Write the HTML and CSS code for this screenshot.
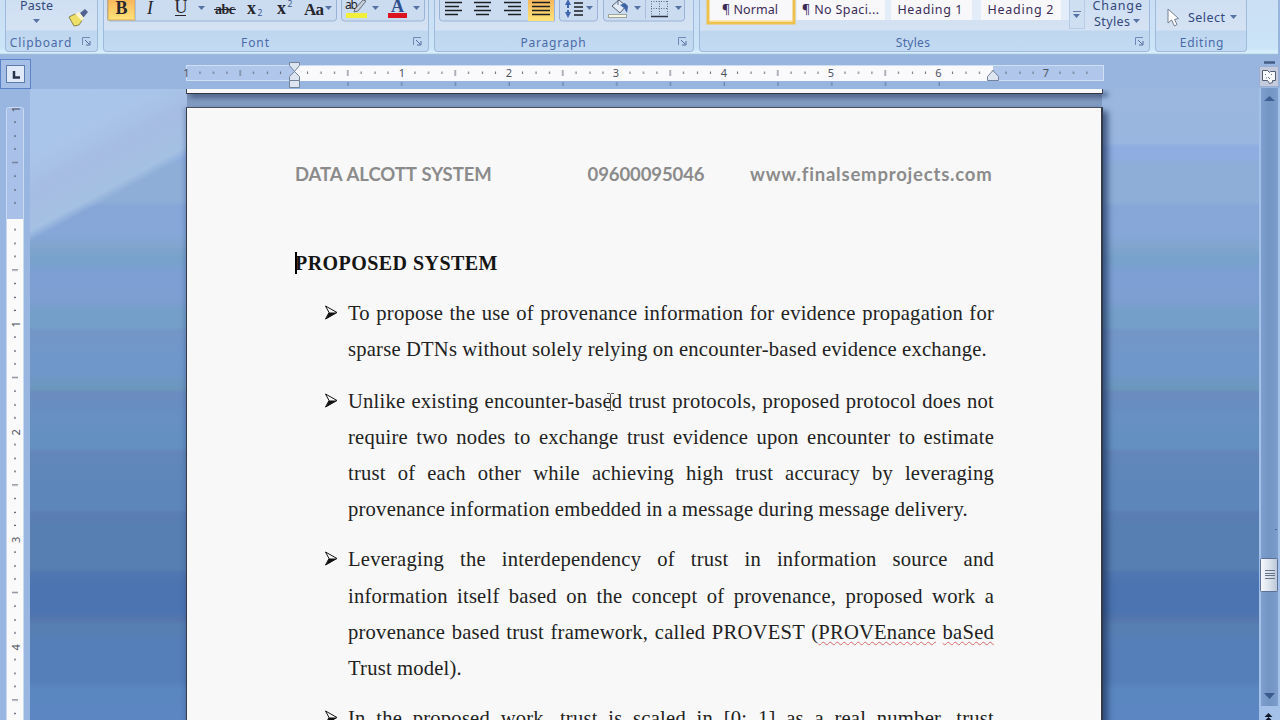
FILE: index.html
```html
<!DOCTYPE html>
<html lang="en">
<head>
<meta charset="utf-8">
<title>Proposed System</title>
<link rel="stylesheet" href="styles.css">
</head>
<body>
<div class="app">
  <header class="ribbon">
    <section class="group clipboard">
      <svg class="tools" width="91" height="31" viewBox="6 0 91 31">
        <text class="ui" x="20" y="10" textLength="33">Paste</text>
        <path class="arrow" d="M33 19h7l-3.500 4z"/>
        <path d="M80 13l5-4 3 3-5 6z" fill="#526290"/><path d="M69 17l6-3 8 5-4 6-5 1z" fill="#eedf66" stroke="#8c8550"/><path d="M75 14l4-2 5 6-2 3z" fill="#fff5c8"/>
      </svg>
      <div class="caption"><span class="cap-clip">Clipboard</span><svg class="launch" width="9" height="9"><path d="M.5 8V.5H8" /><path class="corner" d="M3 3l4 4M4 8h4V4"/></svg></div>
    </section>
    <section class="group font">
      <svg class="tools" width="324" height="31" viewBox="104 0 324 31">
        <path class="box" d="M107.500 -2v20q0 3 3 3h223q3 0 3-3v-20M341.500 -2v20q0 3 3 3h77q3 0 3-3v-20"/>
        <rect x="108" y="-2" width="27" height="22" fill="url(#gold)" stroke="#d3a65b"/>
        <path class="sep" d="M135.500 0v20"/>
        <text class="glyph" x="115.500" y="14" font-weight="700">B</text>
        <text class="glyph" x="147" y="14" font-style="italic">I</text>
        <text class="glyph" x="174.500" y="13">U</text><path d="M175 15.500h11" stroke="#26262c"/>
        <path class="arrow" d="M198 6h7l-3.500 4z"/>
        <text class="glyph abc" x="215" y="13.500" textLength="20">abc</text><path d="M214 9.500h22" stroke="#26262c"/>
        <text class="glyph" x="247" y="13.500" font-weight="700">x</text><text class="tiny" x="257.500" y="15.500">2</text>
        <text class="glyph" x="277" y="13.500" font-weight="700">x</text><text class="tiny" x="287.500" y="6.500">2</text>
        <text class="glyph aa" x="304" y="14.500" textLength="20">Aa</text><path class="arrow" d="M325 6h7l-3.500 4z"/>
        <text class="hl" x="345" y="9" textLength="13">ab</text><path d="M355 9l8-9 3 1-8 10-4 1z" fill="#c8d2de" stroke="#686c76"/><rect x="346" y="13" width="21" height="5" fill="#f2ee3c"/><path class="arrow" d="M372 6h7l-3.500 4z"/>
        <text class="glyph" x="391" y="12" fill="#304f8f" font-weight="700" textLength="14">A</text><rect x="388" y="13" width="19" height="5" fill="#dc1420"/><path class="arrow" d="M413 6h7l-3.500 4z"/>
        <defs><linearGradient id="gold" x2="0" y2="1"><stop stop-color="#f6b25a"/><stop offset="1" stop-color="#ffe477"/></linearGradient></defs>
      </svg>
      <div class="caption"><span class="cap-font">Font</span><svg class="launch" width="9" height="9"><path d="M.5 8V.5H8" /><path class="corner" d="M3 3l4 4M4 8h4V4"/></svg></div>
    </section>
    <section class="group paragraph">
      <svg class="tools" width="258" height="31" viewBox="435 0 258 31">
        <path class="box" d="M439.500 -2v20q0 3 3 3h112V-2M559.500 -2v20q0 3 3 3h32q3 0 3-3v-20M603.500 -2v20q0 3 3 3h75q3 0 3-3v-20"/>
        <rect x="528" y="-2" width="26" height="23" fill="url(#gold)"/>
        <g stroke="#1d1e22" stroke-width="1.300">
          <path d="M445 2.500h17M445 6.500h14M445 10.500h17M445 14.500h13"/>
          <path d="M474 2.500h17M476 6.500h13M474 10.500h17M476 14.500h13"/>
          <path d="M504 2.500h17M508 6.500h13M504 10.500h17M508 14.500h13"/>
          <path d="M532 2.500h18M532 6.500h18M532 10.500h18M532 14.500h18"/>
          <path d="M574 3h9M574 7h9M574 11h9M574 15h9"/>
        </g>
        <path d="M568 -1l3 6h-2v7h2l-3 6-3-6h2V5h-2z" fill="#3f65ae"/><path d="M566 9h4" stroke="#c8daf0" stroke-width="2"/>
        <path class="arrow" d="M586 6h7l-3.500 4z"/>
        <path d="M612 6l7-6 7 6-6 7z" fill="#e2ebf6" stroke="#55606f"/><path d="M620 5l5-2 3 3-1 7-3-5z" fill="#3f65a7"/><path d="M618 -1v6" stroke="#5b6b84"/><rect x="608.500" y="14.500" width="18" height="3" fill="#f7f5e2" stroke="#98a6a2"/>
        <path class="arrow" d="M634 6h7l-3.500 4z"/>
        <path d="M645.500 -1v20" class="sep"/>
        <path d="M651 1.500h17M651 8.500h17M651.500 1v15M659.500 1v15M667.500 1v15" stroke="#606c84" stroke-dasharray="1 1.500" fill="none"/><path d="M651 16.500h17" stroke="#2e3442" stroke-width="1.500"/>
        <path class="arrow" d="M675 6h7l-3.500 4z"/>
      </svg>
      <div class="caption"><span class="cap-para">Paragraph</span><svg class="launch" width="9" height="9"><path d="M.5 8V.5H8" /><path class="corner" d="M3 3l4 4M4 8h4V4"/></svg></div>
    </section>
    <section class="group styles">
      <svg class="tools" width="449" height="31" viewBox="700 0 449 31">
        <path d="M707 -3h363v23H707z" fill="#e3edf9"/>
        <path d="M797 -3h88v23h-88zM891 -3h81v23h-81zM981 -3h80v23h-80z" fill="#f8f8fb"/>
        <rect x="708" y="-4" width="86" height="27" fill="#f8f8fb" stroke="#edc14b" stroke-width="3"/><path d="M710 20.500h82" stroke="#ffebaa"/>
        <text class="ui style" x="722" y="13.500" textLength="56">¶ Normal</text>
        <text class="ui style" x="802" y="13.500" textLength="77">¶ No Spaci...</text>
        <text class="ui style" x="897.500" y="13.500" textLength="65">Heading 1</text>
        <text class="ui style" x="987.500" y="13.500" textLength="66">Heading 2</text>
        <path d="M1069.500 0v28.500h15V0" fill="#cfdff2" stroke="#b7cbe7"/><path d="M1073 11.500h8" stroke="#6b7da4"/><path class="arrow" d="M1073 14h7l-3.500 4z"/>
        <text class="ui" x="1092.500" y="10" textLength="49.500">Change</text>
        <text class="ui" x="1094" y="26" textLength="36">Styles</text><path class="arrow" d="M1133 19h7l-3.500 4z"/>
      </svg>
      <div class="caption"><span class="cap-styles">Styles</span><svg class="launch" width="9" height="9"><path d="M.5 8V.5H8" /><path class="corner" d="M3 3l4 4M4 8h4V4"/></svg></div>
    </section>
    <section class="group editing">
      <svg class="tools" width="90" height="31" viewBox="1156 0 90 31">
        <path d="M1168 9v14l3.500-3 3 6 2.500-1.500-2.500-5 4-1z" fill="#fff" stroke="#747f93"/>
        <text class="ui" x="1188" y="22" textLength="37">Select</text><path class="arrow" d="M1230 15h7l-3.500 4z"/>
      </svg>
      <div class="caption"><span class="cap-edit">Editing</span></div>
    </section>
  </header>

  <main class="workspace">
    <aside class="left">
      <div class="tabstop"><svg width="19" height="18"><rect x=".5" y=".5" width="18" height="17" fill="#dfe9f8" stroke="#5d7cae"/><path d="M8 6v6.500h6" fill="none" stroke="#26334d" stroke-width="2.500"/></svg></div>
      <svg class="vruler" width="30" height="631" viewBox="0 89 30 631">
        <defs>
          <pattern id="vt" x="0" y="216.500" width="30" height="107.500" patternUnits="userSpaceOnUse"><path d="M14 13h2M14 27h2M14 40h2M12 53.500h6M14 67h2M14 81h2M14 94h2" stroke="#5a6070" stroke-width="1.200"/></pattern>
        </defs>
        <rect x="6.500" y="107.500" width="17" height="620" rx="2" fill="#a9c1e8" stroke="#c7d9f3"/>
        <rect x="7" y="219" width="16" height="505" fill="#fafafb"/>
        <rect x="7" y="112" width="16" height="610" fill="url(#vt)"/>
        <g class="num"><text transform="translate(20 112.500) rotate(-90)">1</text><text transform="translate(20 327.500) rotate(-90)">1</text><text transform="translate(20 435.500) rotate(-90)">2</text><text transform="translate(20 543) rotate(-90)">3</text><text transform="translate(20 650.500) rotate(-90)">4</text></g>
      </svg>
    </aside>

    <div class="center">
      <div class="rulerrow">
        <svg width="1229" height="34" viewBox="30 55 1229 34">
          <defs>
            <pattern id="ht" x="294" y="0" width="107.500" height="90" patternUnits="userSpaceOnUse"><path d="M13.500 71.500v2.500M27 71.500v2.500M40.500 71.500v2.500M53.750 70v6M67 71.500v2.500M81 71.500v2.500M94 71.500v2.500" stroke="#626878"/></pattern>
            <pattern id="hb" x="294" y="0" width="53.750" height="90" patternUnits="userSpaceOnUse"><path d="M.5 82v4" stroke="#6e87b3"/><path d="M53.500 82v4" stroke="#6e87b3" stroke-width=".5"/></pattern>
          </defs>
          <rect x="186.500" y="65.500" width="917" height="15" fill="#b0c6ea" stroke="#cfe0f5"/>
          <rect x="294" y="66" width="699" height="15" fill="#fafafc"/>
          <rect x="190" y="66" width="898" height="14" fill="url(#ht)"/>
          <rect x="340" y="81" width="640" height="7" fill="url(#hb)"/>
          <g class="num" text-anchor="middle"><text x="186.500" y="77">1</text><text x="402" y="77">1</text><text x="509" y="77">2</text><text x="616" y="77">3</text><text x="724" y="77">4</text><text x="831" y="77">5</text><text x="938.500" y="77">6</text><text x="1046" y="77">7</text></g>
          <path d="M289.500 62.500h10v3l-5 6-5-6zM289.500 80.500v-4l5-5 5 5v4zM289.500 80.500h10v7h-10zM987.500 80.500v-4l5.500-6 5.500 6v4z" fill="#dce5f0" stroke="#73839c"/>
        </svg>
      </div>
      <div class="desk">
        <div class="prev"></div>
        <article class="page">
          <div class="pagehead"><span class="h1">DATA ALCOTT SYSTEM</span><span class="h2">09600095046</span><span class="h3">www.finalsemprojects.com</span></div>
          <h1 class="title">PROPOSED SYSTEM<i class="caret"></i></h1>
          <ul class="list">
            <li class="first"><svg class="bullet" width="14" height="15"><use href="#wing"/></svg>
              <p class="line">To propose the use of provenance information for evidence propagation for</p>
              <p class="line w639">sparse DTNs without solely relying on encounter-based evidence exchange.</p></li>
            <li><svg class="bullet" width="14" height="15"><use href="#wing"/></svg>
              <p class="line">Unlike existing encounter-based trust protocols, proposed protocol does not</p>
              <p class="line">require two nodes to exchange trust evidence upon encounter to estimate</p>
              <p class="line">trust of each other while achieving high trust accuracy by leveraging</p>
              <p class="line w620">provenance information embedded in a message during message delivery.</p></li>
            <li><svg class="bullet" width="14" height="15"><use href="#wing"/></svg>
              <p class="line">Leveraging the interdependency of trust in information source and</p>
              <p class="line">information itself based on the concept of provenance, proposed work a</p>
              <p class="line">provenance based trust framework, called PROVEST (<span class="err">PROVEnance</span> <span class="err">baSed</span></p>
              <p class="line w114">Trust model).</p></li>
            <li><svg class="bullet" width="14" height="15"><use href="#wing"/></svg>
              <p class="line">In the proposed work, trust is scaled in [0; 1] as a real number, trust</p></li>
          </ul>
          <svg class="ibeam" width="9" height="20"><path d="M1 1.500h3M5 1.500h3M4.500 2v16M1 18.500h3M5 18.500h3" stroke="#555"/></svg>
        </article>
      </div>
    </div>

    <aside class="scroll">
      <svg width="21" height="665" viewBox="1259 55 21 665">
        <defs>
          <linearGradient id="track"><stop stop-color="#7f9fcf"/><stop offset=".5" stop-color="#7295c3"/><stop offset="1" stop-color="#7d9dcb"/></linearGradient>
          <linearGradient id="thumb"><stop stop-color="#f7f9fc"/><stop offset=".5" stop-color="#dce3ed"/><stop offset="1" stop-color="#b9c5d6"/></linearGradient>
        </defs>
        <rect x="1259" y="88" width="21" height="632" fill="#a3c1e9"/>
        <rect x="1261" y="88" width="17" height="618" fill="url(#track)"/>
        <path d="M1264 62.500h11" stroke="#445d86" stroke-width="2.500"/>
        <rect x="1259.500" y="66.500" width="19" height="20" fill="#c4cbdc" stroke="#9daed0"/>
        <path d="M1262.500 70.500h5l2 2 1-1h5v9h-3v2l-3 1-2-3h-5z" fill="#f7f8fa" stroke="#535d72"/><path d="M1265 74l1 1M1268 77l2 2M1272 74l-1 1M1266 78h1" stroke="#6b7383" fill="none"/>
        <path d="M1264 101h11l-5.500-5z" fill="#3d5f93"/>
        <rect x="1260.500" y="558.500" width="17" height="33" rx="1" fill="url(#thumb)" stroke="#5c7199"/>
        <path d="M1265 570.500h10M1265 573.500h10M1265 575.500h10M1265 578.500h10" stroke="#667487"/>
        <path d="M1264 693h11l-5.500 6z" fill="#3b5a8d"/>
        <path d="M1264.500 717l4-4 4 4zM1264.500 721l4-4 4 4z" fill="#101827"/><path d="M1275 529.500h2" stroke="#496796"/>
      </svg>
    </aside>
  </main>
</div>
<svg width="0" height="0" class="defs"><defs><g id="wing"><path d="M1.500 1l11.500 6.500L1.500 14l3.500-6.500z" fill="none" stroke="#111"/><path d="M5 7.500h8L2 14z" fill="#111"/></g></defs></svg>
</body>
</html>
```

FILE: styles.css
```css
* { box-sizing: border-box; }
body { margin: 0; overflow: hidden; background: #98b5df; font-family: "Noto Sans", "Open Sans", sans-serif; }
.app { width: 1280px; height: 720px; display: flex; flex-direction: column; overflow: hidden; }
.defs { display: block; }

/* Ribbon */
.ribbon { flex: none; height: 55px; width: 1278px; display: flex; gap: 5px; padding-left: 5px; background: linear-gradient(#cbdff4 0, #cbe4f7 48px, #d9f0fb 53px, #8bacd0 55px); }
.group { flex: none; height: 52px; border: 1px solid #9fbbdc; border-top: 0; border-radius: 0 0 4px 4px; background: linear-gradient(#cfdff2 0, #d4e2f3 30px, #bfd6ef 31px, #c3dbf2 52px); display: flex; flex-direction: column; }
.clipboard { width: 93px; }
.font { width: 326px; }
.paragraph { width: 260px; }
.styles { width: 451px; }
.editing { width: 92px; }
.tools { display: block; flex: none; overflow: visible; }
.caption { height: 20px; display: flex; align-items: center; justify-content: center; position: relative; font-size: 12px; line-height: 20px; color: #4a6ba8; padding-top: 3px; }
.launch { position: absolute; right: 6px; top: 6px; fill: none; stroke: #7189b4; }
.styles .launch { right: 5px; }
.launch .corner { stroke: #526a98; }
.cap-clip { letter-spacing: .85px; margin-right: 21px; }
.cap-font { letter-spacing: .95px; margin-right: 21px; }
.cap-para { letter-spacing: .75px; margin-right: 21px; }
.cap-styles { letter-spacing: .3px; margin-right: 23px; }
.cap-edit { letter-spacing: .7px; margin-left: 2px; }
.ui { font-size: 12.5px; fill: #33487c; }
.ui.style { fill: #3c2c58; }
.glyph { font-family: "Liberation Serif", serif; font-size: 18px; fill: #26262c; }
.glyph.abc { font-size: 14px; font-weight: 700; }
.glyph.aa { font-size: 17px; font-weight: 700; }
.glyph[fill] { fill: #304f8f; }
.hl { font-size: 12px; fill: #222; }
.tiny { font-size: 8.5px; fill: #3a558f; }
.arrow { fill: #5672a5; }
.box { fill: #cbdcf1; stroke: #9ab3d6; }
.sep { stroke: #a9bfdd; }

/* Rulers */
.workspace { height: 665px; display: flex; }
.left { flex: none; width: 30px; display: flex; flex-direction: column; background: #98b6e0; }
.tabstop { height: 30px; width: 31px; margin-top: 4px; border: 1px solid #5a82c6; display: grid; place-items: center; background: #a5bfe7; position: relative; }
.vruler { display: block; flex: none; }
.num { font-size: 11px; fill: #4e5361; }
.center { flex: none; width: 1229px; display: flex; flex-direction: column; }
.rulerrow { height: 34px; background: #98b5df; }
.rulerrow svg { display: block; }
.scroll { flex: none; width: 21px; background: #98b5df; }
.scroll svg { display: block; }

/* Document */
.desk { height: 631px; padding-left: 156px; display: flex; flex-direction: column; gap: 13px; overflow: hidden;
  background:
    linear-gradient(#7389ae, #8ba6cd) 157px 4px / 915px 16px no-repeat,
    linear-gradient(151.5deg, #a9c6ea 0, #a9c4e8 65px, #a6bce2 92px, #a4c0e2 125px, transparent 134px) 0 0 / 157px 160px no-repeat,
    linear-gradient(#9bb7e0 0, #98b6df 54px, #8fade0 58px, #8fade0 70px, #8eaed8 75px, #8eaed8 112px, #86a6d8 118px, #86a7d8 145px, #80a5ce 158px, #77a2cb 170px, #7d9fd3 184px, #7d9fd1 210px, #739fc8 224px, #739fc8 238px, #7496c7 242px, #6f98ca 282px, #6c97bd 300px, #6b8cbf 304px, #6790c3 330px, #6290c0 359px, #6486b8 363px, #5d87ba 390px, #5d87ba 420px, #5a7db5 424px, #577fb1 440px, #577fb1 480px, #5077b0 484px, #4b74b0 495px, #4b74b0 522px, #5577ae 531px, #577fb1 536px, #557fb8 555px, #557fb8 592px, #5a87c0 600px, #5c86c2 631px); }
.prev { flex: none; width: 917px; height: 5px; background: #f8f8f8; border: 1px solid #3e424c; border-top: 0; border-bottom: 1px solid #34363e; box-shadow: 5px 3px 5px rgba(40,60,100,.6); }
.page { flex: none; width: 917px; height: 640px; background: #f8f8f8; border: 1px solid #353b49; border-right-width: 2px; border-top: 1px solid #4b505c; box-shadow: 5px 4px 6px rgba(32,55,98,.7), -2px 0 4px rgba(50,80,140,.25); position: relative; padding: 52px 108px 0 108px; }
.pagehead { display: flex; height: 28px; color: #8b8b8b; font: 700 18.5px/28px Lato, sans-serif; white-space: nowrap; }
.h1, .h2, .h3 { display: block; }
.h1 { width: 292.5px; letter-spacing: -.1px; word-spacing: 1px; }
.h2 { width: 162.5px; letter-spacing: -.1px; }
.h3 { letter-spacing: .8px; }
.title { margin: 59.5px 0 0; height: 30px; position: relative; font: 700 20px/30px "Liberation Serif", serif; color: #151515; white-space: nowrap; letter-spacing: .45px; }
.caret { position: absolute; left: 0; top: 4px; width: 2px; height: 22px; background: #000; }
.list { margin: 17.8px 0 0; padding: 0 0 0 53px; list-style: none; font: 20.6px/36.2px "Liberation Serif", serif; color: #222; letter-spacing: .22px; word-spacing: -2px; }
.list li { position: relative; margin-bottom: 14px; }
.list .first { margin-bottom: 15px; }
.bullet { position: absolute; left: -24px; top: 10px; }
.line { margin: 0; width: 646px; height: 36.2px; text-align: justify; text-align-last: justify; white-space: nowrap; }
.w639 { width: 639px; }
.w620 { width: 620px; }
.w114 { width: 114px; }
.err { text-decoration: underline wavy #d76a6a 1px; text-underline-offset: 2px; text-decoration-skip-ink: none; }
.ibeam { position: absolute; left: 419px; top: 284px; }
```
